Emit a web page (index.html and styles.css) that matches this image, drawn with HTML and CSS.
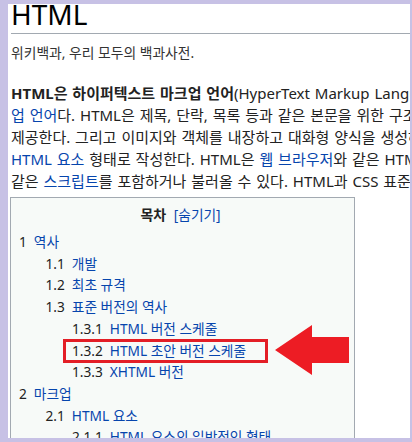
FILE: index.html
```html
<!DOCTYPE html>
<html lang="ko">
<head>
<meta charset="utf-8">
<title>HTML - 위키백과</title>
<link rel="stylesheet" href="styles.css">
</head>
<body>
<div class="page">
  <h1 class="title">HTML</h1>
  <div class="tagline">위키백과, 우리 모두의 백과사전.</div>
  <p class="lead"><b>HTML은 하이퍼텍스트 마크업 언어</b>(HyperText Markup Language)는 웹 페이지를 위한 지배적인 <a href="#">마크</a><br><a href="#">업 언어</a>다. HTML은 제목, 단락, 목록 등과 같은 본문을 위한 구조적 의미를 나타내는 것뿐만 아니라<br>제공한다. 그리고 이미지와 객체를 내장하고 대화형 양식을 생성하는 데 사용될 수 있다. HTML은<br><a href="#">HTML 요소</a> 형태로 작성한다. HTML은 <a href="#">웹 브라우저</a>와 같은 HTML 처리 장치의 행동에 영향을 주는<br>같은 <a href="#">스크립트</a>를 포함하거나 불러올 수 있다. HTML과 CSS 표준의 공동 책임자인 W3C는</p>

  <div class="toc">
    <div class="toc-title"><b>목차</b> <span class="toggle">[<a href="#">숨기기</a>]</span></div>
    <ul class="toc-list">
      <li><a href="#"><span class="num">1</span>역사</a>
        <ul>
          <li><a href="#"><span class="num">1.1</span>개발</a></li>
          <li><a href="#"><span class="num">1.2</span>최초 규격</a></li>
          <li><a href="#"><span class="num">1.3</span>표준 버전의 역사</a>
            <ul>
              <li><a href="#"><span class="num">1.3.1</span>HTML 버전 스케줄</a></li>
              <li><a href="#"><span class="num">1.3.2</span>HTML 초안 버전 스케줄</a></li>
              <li><a href="#"><span class="num">1.3.3</span>XHTML 버전</a></li>
            </ul>
          </li>
        </ul>
      </li>
      <li><a href="#"><span class="num">2</span>마크업</a>
        <ul>
          <li><a href="#"><span class="num">2.1</span>HTML 요소</a>
            <ul>
              <li><a href="#"><span class="num">2.1.1</span>HTML 요소의 일반적인 형태</a></li>
            </ul>
          </li>
        </ul>
      </li>
    </ul>
  </div>

  <div class="highlight"></div>
  <svg class="arrow" width="74" height="50" viewBox="0 0 74 50">
    <polygon points="0,25 37,0 37,12 74,12 74,38 37,38 37,50" fill="#ed1c24"/>
  </svg>
</div>
</body>
</html>
```

FILE: styles.css
```css
html, body {
  margin: 0;
  padding: 0;
}
body {
  background: #c7c1e5;
  height: 442px;
  overflow: hidden;
}
.page {
  position: relative;
  margin: 4px 2px 0 8px;
  height: 434px;
  padding-left: 3px;
  background: #fff;
  overflow: hidden;
  font-family: "Noto Sans", "Noto Sans CJK KR", sans-serif;
  color: #222;
}
a {
  color: #0645ad;
  text-decoration: none;
}
.title {
  margin: 0;
  font-size: 28px;
  line-height: 21px;
  padding-bottom: 8px;
  font-weight: normal;
  color: #000;
  border-bottom: 1px solid #a2a9b1;
}
.tagline {
  margin-top: 9px;
  font-size: 13.8px;
  line-height: 20px;
  color: #333;
}
.lead {
  margin: 19px 0 0;
  font-size: 15px;
  line-height: 22px;
  word-spacing: 1px;
  white-space: nowrap;
}
.lead b {
  font-weight: bold;
  color: #222;
}
.toc {
  margin: 5px 0 0 -1px;
  width: 335px;
  border: 1px solid #a2a9b1;
  background: #f7faf8;
  padding: 6px 0 10px 8px;
  font-size: 13.7px;
}
.toc-title {
  text-align: center;
  line-height: 22px;
  font-size: 14px;
  padding-right: 12px;
}
.toc-title b {
  color: #222;
}
.toggle {
  margin-left: 4px;
  font-size: 13.7px;
  color: #0645ad;
}
.toc ul {
  list-style: none;
  margin: 0;
  padding: 0;
}
.toc-list {
  margin-top: 5px !important;
}
.toc ul ul {
  margin-left: 26.5px;
}
.toc li {
  line-height: 21.7px;
  white-space: nowrap;
}
.num {
  color: #222;
  padding-right: 7px;
}
.highlight {
  position: absolute;
  left: 55px;
  top: 335px;
  width: 199px;
  height: 18px;
  border: 3px solid #e31e26;
}
.arrow {
  position: absolute;
  left: 267px;
  top: 321px;
  display: block;
}
```
